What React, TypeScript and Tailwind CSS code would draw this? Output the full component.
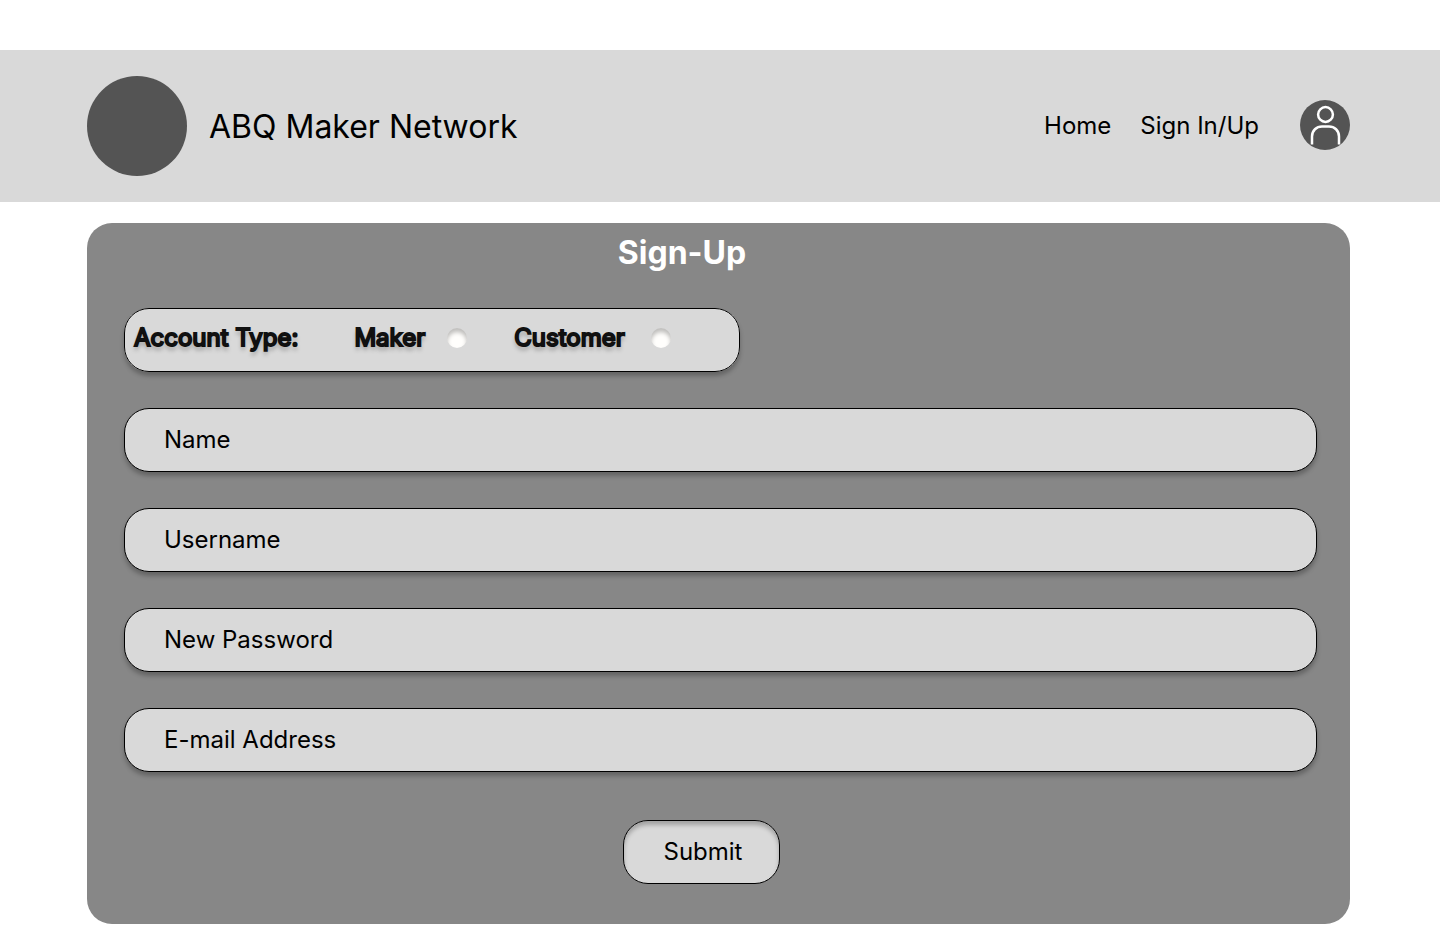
const fields = [
  { id: "name", label: "Name", type: "text" },
  { id: "username", label: "Username", type: "text" },
  { id: "new-password", label: "New Password", type: "password" },
  { id: "email", label: "E-mail Address", type: "email" },
];

const labelStyle =
  "text-[#111] [-webkit-text-stroke:2px_#111] [paint-order:stroke_fill] [text-shadow:0_4px_4px_rgb(0_0_0/0.35)]";

const radioStyle =
  "size-5 shrink-0 appearance-none rounded-full bg-[#fffefc] shadow-[inset_0_4px_4px_rgb(0_0_0/0.25)] checked:bg-[#545454]";

function Header() {
  return (
    <header className="flex h-[152px] items-center bg-[#d9d9d9] pl-[87px] pr-[90px]">
      <div className="size-[100px] shrink-0 rounded-full bg-[#545454]" />
      <p className="ml-[22px] pt-[2px] text-[32px] leading-10">ABQ Maker Network</p>
      <nav className="ml-auto flex items-center gap-[29px] pb-[2px] text-2xl">
        <a href="#home" className="pt-[2px]">Home</a>
        <a href="#sign" className="pt-[2px]">Sign In/Up</a>
        <a href="#account" aria-label="Account" className="ml-3">
          <svg viewBox="0 0 50 50" className="size-[50px]" fill="none">
            <circle cx="25" cy="25" r="25" fill="#545454" />
            <g stroke="#fff" strokeWidth="2.5">
              <circle cx="25.500" cy="14.500" r="7.400" />
              <path d="M12 44.500V36.500C12 30.500 16.500 26.500 22 26.500H29C34.500 26.500 39 30.500 39 36.500V44.500" />
            </g>
          </svg>
        </a>
      </nav>
    </header>
  );
}

export default function App() {
  return (
    <div className="pt-[50px] font-['Inter',sans-serif] text-black">
      <Header />
      <main className="mb-5 ml-[87px] mr-[90px] mt-[21px] rounded-[25px] bg-[#878787] pb-10 pl-[37px] pr-[33px] pt-[10px]">
        <form className="flex flex-col">
          <h1 className="mr-[77px] text-center text-[32px] font-bold leading-10 text-white">
            Sign-Up
          </h1>
          <fieldset
            aria-labelledby="account-type"
            className="mt-[35px] w-full max-w-[616px] rounded-[25px] border border-black bg-[#d9d9d9] text-2xl shadow-[0_4px_4px_rgb(0_0_0/0.25)]"
          >
            <div className="flex h-[62px] items-center pb-1 pl-[9px]">
              <span id="account-type" className={labelStyle}>
                Account Type:
              </span>
              <label htmlFor="maker" className={`ml-14 ${labelStyle}`}>
                Maker
              </label>
              <input id="maker" type="radio" name="account" value="maker" className={`ml-[22px] ${radioStyle}`} />
              <label htmlFor="customer" className={`ml-[47px] ${labelStyle}`}>
                Customer
              </label>
              <input id="customer" type="radio" name="account" value="customer" className={`ml-[26px] ${radioStyle}`} />
            </div>
          </fieldset>
          <div className="mt-9 flex flex-col gap-9">
            {fields.map((field) => (
              <div
                key={field.id}
                className="flex h-16 items-center rounded-[25px] border border-black bg-[#d9d9d9] pl-[39px] text-2xl shadow-[0_4px_4px_rgb(0_0_0/0.25)]"
              >
                <label htmlFor={field.id}>{field.label}</label>
                <input
                  id={field.id}
                  type={field.type}
                  className="ml-4 mr-6 min-w-0 flex-1 bg-transparent outline-none"
                />
              </div>
            ))}
          </div>
          <button
            type="submit"
            className="mr-[38px] mt-12 h-16 w-[157px] self-center rounded-[25px] border border-black bg-[#d9d9d9] pl-[3px] text-2xl shadow-[inset_0_4px_4px_rgb(0_0_0/0.25)]"
          >
            Submit
          </button>
        </form>
      </main>
    </div>
  );
}
